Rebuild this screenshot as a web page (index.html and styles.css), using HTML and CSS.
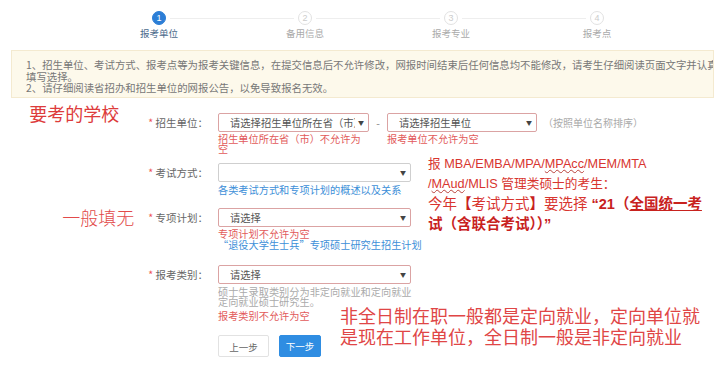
FILE: index.html
```html
<!DOCTYPE html>
<html lang="zh-CN">
  <head>
    <meta charset="UTF-8" />
    <meta name="viewport" content="width=device-width, initial-scale=1.0" />
    <title>报考单位</title>
    <link rel="stylesheet" href="styles.css">
  </head>
  <body>
    <div class="steps">
      <div class="step active">
        <span class="dot">1</span>
        <span class="step-name">报考单位</span>
      </div>
      <div class="step">
        <span class="dot">2</span>
        <span class="step-name">备用信息</span>
      </div>
      <div class="step">
        <span class="dot">3</span>
        <span class="step-name">报考专业</span>
      </div>
      <div class="step">
        <span class="dot">4</span>
        <span class="step-name">报考点</span>
      </div>
    </div>

    <div class="notice">
      <p>1、招生单位、考试方式、报考点等为报考关键信息，在提交信息后不允许修改，网报时间结束后任何信息均不能修改，请考生仔细阅读页面文字并认真</p>
      <p>填写选择。</p>
      <p>2、请仔细阅读省招办和招生单位的网报公告，以免导致报名无效。</p>
    </div>

    <div class="form">
      <div class="row row-unit">
        <div class="label-cell">
          <span class="note note-school">要考的学校</span>
          <span class="label"><i>*</i> 招生单位：</span>
        </div>
        <div class="field-line">
          <div class="col col-short">
            <div class="select error"><span class="select-text">请选择招生单位所在省（市）</span></div>
            <div class="msg err">招生单位所在省（市）不允许为空</div>
          </div>
          <span class="dash">-</span>
          <div class="col col-unit">
            <div class="select error"><span class="select-text">请选择招生单位</span></div>
            <div class="msg err">报考单位不允许为空</div>
          </div>
          <span class="hint">（按照单位名称排序）</span>
        </div>
      </div>

      <div class="row">
        <div class="label-cell">
          <span class="label"><i>*</i> 考试方式：</span>
        </div>
        <div class="col col-wide">
          <div class="select"><span class="select-text"></span></div>
          <div class="msg link">各类考试方式和专项计划的概述以及关系</div>
        </div>
      </div>

      <div class="row row-plan">
        <div class="label-cell">
          <span class="note note-none">一般填无</span>
          <span class="label"><i>*</i> 专项计划：</span>
        </div>
        <div class="col col-wide">
          <div class="select error"><span class="select-text">请选择</span></div>
          <div class="msg err">专项计划不允许为空</div>
          <div class="msg link after">“退役大学生士兵”专项硕士研究生招生计划</div>
        </div>
      </div>

      <div class="row row-type">
        <div class="label-cell">
          <span class="label"><i>*</i> 报考类别：</span>
        </div>
        <div class="col col-wide">
          <div class="select error"><span class="select-text">请选择</span></div>
          <div class="msg gray">硕士生录取类别分为非定向就业和定向就业<br>定向就业硕士研究生。</div>
          <div class="msg err spaced">报考类别不允许为空</div>
        </div>
      </div>

      <div class="row">
        <div class="label-cell"></div>
        <div class="buttons">
          <button class="btn btn-prev">上一步</button>
          <button class="btn btn-next">下一步</button>
        </div>
      </div>

      <div class="remark remark-mode">
        <div class="small">报 MBA/EMBA/MPA/<u>MPAcc</u>/MEM/MTA</div>
        <div class="small">/<u>MAud</u>/MLIS 管理类硕士的考生：</div>
        <div>今年<b>【</b>考试方式<b>】</b>要选择 <b>“21（<span class="line">全国统一考</span></b></div>
        <div><b>试（含联合考试））”</b></div>
      </div>

      <div class="remark remark-type">
        非全日制在职一般都是定向就业，定向单位就<br>
        是现在工作单位，全日制一般是非定向就业
      </div>
    </div>
  </body>
</html>
```

FILE: styles.css
```css
body {
  margin: 0;
  background-color: #fff;
  font-family: "Noto Sans CJK SC", "Liberation Sans", sans-serif;
  color: #666;
  overflow: hidden;
}

/* steps */
.steps {
  display: flex;
  width: 584px;
  margin-left: 86px;
  padding-top: 11px;
  height: 39px;
  box-sizing: border-box;
}

.step {
  flex: 1;
  position: relative;
  display: flex;
  flex-direction: column;
  align-items: center;
}

.step:not(:last-child)::after {
  content: "";
  position: absolute;
  top: 7px;
  left: calc(50% + 11px);
  width: calc(100% - 22px);
  height: 1px;
  background-color: #eee;
}

.dot {
  width: 14px;
  height: 14px;
  box-sizing: border-box;
  border: 1px solid #e2e2e2;
  border-radius: 50%;
  font-family: "Liberation Sans", sans-serif;
  font-size: 9px;
  line-height: 12px;
  text-align: center;
  color: #ccc;
}

.step-name {
  margin-top: 2px;
  font-size: 9.5px;
  line-height: 12px;
  color: #aaa;
}

.step.active .dot {
  background-color: #2c7ed6;
  border-color: #2c7ed6;
  color: #fff;
}

.step.active .step-name {
  color: #4b6a8c;
}

/* notice */
.notice {
  margin: 11px 7px 0 11px;
  padding: 8px 0 3px 14px;
  background-color: #fdf9eb;
  border: 1px solid #f4ead0;
  overflow: hidden;
}

.notice p {
  margin: 0;
  font-size: 10.4px;
  line-height: 11.5px;
  color: #777;
  white-space: nowrap;
}

/* form */
.form {
  position: relative;
  margin-top: 15px;
}

.row {
  display: grid;
  grid-template-columns: 218px auto;
  margin-bottom: 13px;
}

.row-unit {
  margin-bottom: 9px;
}

.row-plan {
  margin-bottom: 15px;
}

.row-type {
  margin-bottom: 14px;
}

.label-cell {
  display: flex;
  justify-content: flex-end;
  align-items: flex-start;
  padding-right: 10px;
}

.label {
  font-size: 10.5px;
  line-height: 19px;
  color: #666;
  white-space: nowrap;
}

.label i {
  font-style: normal;
  color: #e55;
}

.note {
  font-size: 18px;
  line-height: 19px;
  color: #dd3b3b;
}

.note-school {
  margin-right: 29px;
  margin-top: -9px;
}

.note-none {
  margin-right: 14px;
  font-weight: 300;
  color: #e24a4a;
}

.field-line {
  display: flex;
  align-items: flex-start;
}

.col-short {
  width: 151px;
}

.col-unit {
  width: 150px;
}

.col-wide {
  width: 193px;
}

.dash {
  width: 18px;
  text-align: center;
  font-size: 10.5px;
  line-height: 19px;
  color: #888;
}

.hint {
  margin-left: 6px;
  font-size: 10px;
  line-height: 19px;
  color: #aaa;
}

.select {
  position: relative;
  height: 19px;
  box-sizing: border-box;
  padding: 0 13px 0 11px;
  border: 1px solid #cfcfcf;
  border-radius: 2px;
  font-size: 10.3px;
  line-height: 17px;
  color: #555;
}

.select-text {
  display: block;
  height: 17px;
  white-space: nowrap;
  overflow: hidden;
}

.select::after {
  content: "▼";
  position: absolute;
  right: 4px;
  top: 0;
  font-size: 6px;
  line-height: 17px;
  color: #444;
}

.select.error {
  border-color: #dba3a3;
}

.msg {
  font-size: 10.2px;
  line-height: 10px;
  margin-top: 2px;
}

.msg.after {
  margin-top: 1px;
}

.msg.spaced {
  margin-top: 4px;
}

.err {
  color: #e25a5a;
}

.link {
  margin-top: 3px;
  color: #3d8fd8;
  white-space: nowrap;
}

.gray {
  margin-top: 3px;
  color: #aaa;
  white-space: nowrap;
}

.buttons {
  display: flex;
  gap: 10px;
}

.btn {
  height: 22px;
  border-radius: 2px;
  font-family: "Noto Sans CJK SC", sans-serif;
  font-size: 9.5px;
  line-height: 20px;
  cursor: pointer;
}

.btn-prev {
  width: 51px;
  background-color: #fff;
  border: 1px solid #e2e2e2;
  color: #666;
}

.btn-next {
  width: 42px;
  background-color: #2f8de2;
  border: 1px solid #2f8de2;
  color: #fff;
  padding: 0;
}

/* red remarks written over the screenshot */
.remark {
  position: absolute;
  color: #d8352f;
  white-space: nowrap;
}

.remark-mode {
  left: 428px;
  top: 41px;
  font-family: "Liberation Sans", "Noto Sans CJK SC", sans-serif;
  font-size: 14.5px;
  line-height: 20px;
}

.remark-mode .small {
  font-size: 12.7px;
}

.remark-mode u {
  text-decoration: underline wavy #b9403a;
  text-decoration-thickness: 1px;
}

.remark-mode b {
  color: #c8221e;
}

.remark-mode .line {
  text-decoration: underline;
}

.remark-type {
  left: 340px;
  top: 192px;
  font-size: 18px;
  line-height: 21px;
  color: #e04646;
}
```
